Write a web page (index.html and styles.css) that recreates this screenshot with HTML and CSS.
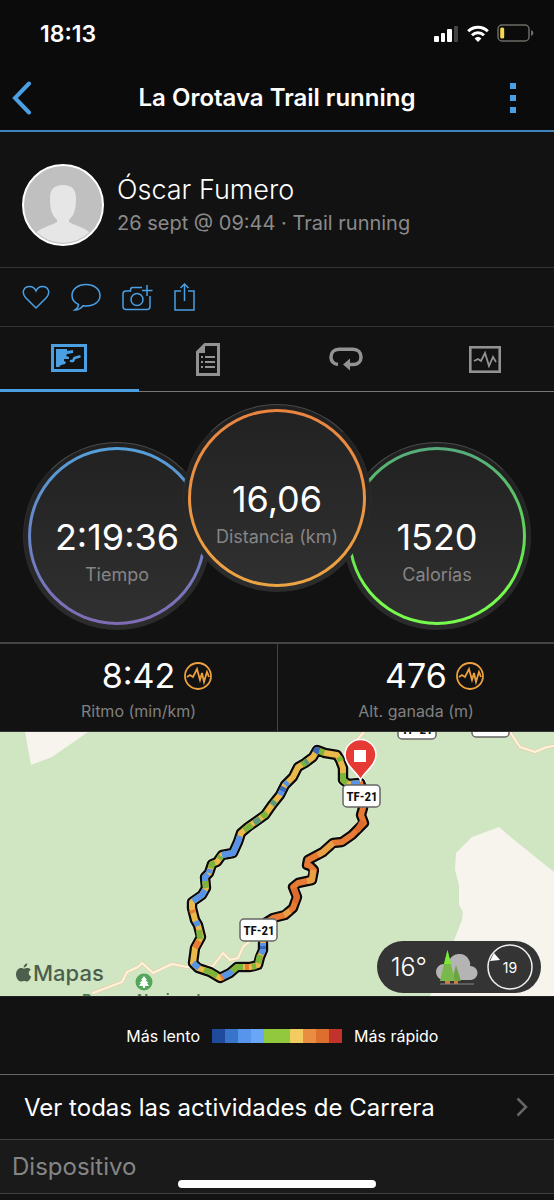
FILE: index.html
```html
<!DOCTYPE html>
<html lang="es">
<head>
<meta charset="utf-8">
<meta name="viewport" content="width=device-width, initial-scale=1">
<title>La Orotava Trail running</title>
<link rel="stylesheet" href="styles.css">
</head>
<body>
<div class="status">
  <time class="clock">18:13</time>
  <div class="status-icons">
    <svg width="25" height="17" viewBox="0 0 25 17" fill="#fff" aria-label="Cobertura"><rect y="11" width="5" height="6" rx="1"/><rect x="7" y="8" width="4" height="9" rx="1"/><rect x="13" y="4" width="5" height="13" rx="1"/><rect x="20" y="1" width="4" height="16" rx="1" fill="#444"/></svg>
    <svg width="22" height="17" viewBox="0 0 22 17" fill="none" stroke="#fff" stroke-width="3" aria-label="Wifi"><path d="M1.2 6.2a14 14 0 0 1 19.6 0M5 10.3a8.6 8.6 0 0 1 12 0"/><path d="M11 17l-3.4-3.6a5 5 0 0 1 6.8 0z" fill="#fff" stroke="none"/></svg>
    <svg width="37" height="19" viewBox="0 0 37 19" aria-label="Batería"><rect x="1" y="1" width="31" height="16" rx="4" fill="none" stroke="#6b6b66" stroke-width="1.5"/><rect x="3.2" y="3.5" width="4" height="11" rx="1.5" fill="#f5d94e"/><path d="M34 6q2.5 1 2.500 3t-2.500 3z" fill="#6b6b66"/></svg>
  </div>
</div>
<header class="header">
  <button class="plain" aria-label="Volver"><svg width="20" height="34" viewBox="0 0 20 34"><path d="M17 2.500L3 17l14 14.500" fill="none" stroke="#4b9fe3" stroke-width="4" stroke-linecap="round" stroke-linejoin="miter"/></svg></button>
  <h1>La Orotava Trail running</h1>
  <button class="plain menu" aria-label="Más opciones"><svg width="6" height="30" viewBox="0 0 6 30" fill="#4b9fe3"><path d="M0 0h6v6H0zM0 12h6v6H0zM0 24h6v6H0z"/></svg></button>
</header>
<main>
<section class="profile">
  <svg class="avatar" viewBox="0 0 82 82" role="img" aria-label="Foto de perfil"><clipPath id="face"><circle cx="41" cy="41" r="38"/></clipPath><circle cx="41" cy="41" r="40" fill="#c0c0c0" stroke="#fff" stroke-width="2"/><g clip-path="url(#face)" fill="#e6e6e6"><path d="M41 21c9 0 13 5 13 13 0 10-1 16-7 22v2c4 3 16 5 22 12v12H13V70c6-7 18-9 22-12v-2c-6-6-7-12-7-22 0-8 4-13 13-13z"/></g></svg>
  <div>
    <h2>Óscar Fumero</h2>
    <p>26 sept @ 09:44 · Trail running</p>
  </div>
</section>
<div class="actions">
  <button class="plain" aria-label="Me gusta"><svg width="28" height="28" viewBox="0 0 28 28"><path d="M14 25L3.500 14.500C-1 9 2 3.500 7.500 3.500c3 0 5.300 1.800 6.500 4.500 1.200-2.700 3.500-4.500 6.500-4.500 5.500 0 8.500 5.500 4 11z"/></svg></button>
  <button class="plain" aria-label="Comentar"><svg width="30" height="28" viewBox="0 0 30 28"><path d="M7.500 21.500C3 19.500 1 16 1 12.500 1 6 7 1.500 15 1.500S29 6 29 12.500 23 23 15 23l-3-.2c-2 2.600-5 4.200-8 4.200 2-1.300 3.500-3.200 3.500-5.500z"/></svg></button>
  <button class="plain" aria-label="Añadir foto"><svg width="31" height="28" viewBox="0 0 31 28"><path d="M20 4.500H10.500q-2 0-2 2.500v1H4q-3 0-3 3v12.500q0 3 3 3h21q3 0 3-3V13M25 2v11M20 7.500h10.500"/><circle cx="15" cy="16.500" r="6"/></svg></button>
  <button class="plain" aria-label="Compartir"><svg width="21" height="28" viewBox="0 0 21 28"><path d="M7 8H1v19h19V8h-6M10.500 18V1M6.500 5l4-4 4 4"/></svg></button>
</div>
<nav class="tabs" aria-label="Vistas de la actividad">
  <button class="tab active" aria-label="Resumen"><svg width="36" height="28" viewBox="0 0 36 28"><rect x="1.500" y="1.500" width="33" height="25" fill="none" stroke="#4b9fe3" stroke-width="3"/><path fill="#4b9fe3" d="M5 5h11v2l6-1v3l-6 1-1 2 3 1v2h-5v2l2 1-1 2-4 1-2 2H5z"/><path d="M20 17h2l1.500-3 5-1.500" fill="none" stroke="#4b9fe3" stroke-width="2.600" stroke-linecap="round" stroke-linejoin="round"/></svg></button>
  <button class="tab" aria-label="Detalles"><svg width="24" height="33" viewBox="0 0 24 33"><path d="M9 1.500h13.500v30h-21V9z" fill="none" stroke="#929292" stroke-width="3"/><path d="M0 9L9 0v10H0zM5 13h2v2H5zm4 0h10v2H9zm-4 5h2v2H5zm4 0h10v2H9zm-4 5h2v2H5zm4 0h10v2H9z" fill="#929292"/></svg></button>
  <button class="tab" aria-label="Vueltas"><svg width="34" height="24" viewBox="0 0 34 24"><path d="M9 17.500C4.500 17 2 14 2 10.200 2 5.500 5 2.200 10 2.200h14c5 0 8 3.300 8 7.800s-3 7.500-8 7.500h-4" fill="none" stroke="#929292" stroke-width="3.500"/><path d="M14 17.500l7-6v12z" fill="#929292"/></svg></button>
  <button class="tab" aria-label="Gráficos"><svg width="32" height="27" viewBox="0 0 32 27"><rect x="1.300" y="1.300" width="29.400" height="24.400" fill="none" stroke="#929292" stroke-width="2.600"/><path d="M5 15l4-2 3 2 4-8 4 13 4-9 3 5" fill="none" stroke="#929292" stroke-width="1.800"/></svg></button>
</nav>
<section class="dials">
  <div class="dial time"><div class="ring"><div class="face"><strong>2:19:36</strong><span>Tiempo</span></div></div></div>
  <div class="dial distance"><div class="ring"><div class="face"><strong>16,06</strong><span>Distancia (km)</span></div></div></div>
  <div class="dial calories"><div class="ring"><div class="face"><strong>1520</strong><span>Calorías</span></div></div></div>
</section>
<section class="stats">
  <div class="stat"><div class="stat-value"><strong>8:42</strong><svg width="28" height="28" viewBox="0 0 28 28"><circle cx="14" cy="14" r="13"/><path d="M3 15l3-2 3 2 4-8 3 11 2-7 2 9 3-10 2 5"/></svg></div><span>Ritmo (min/km)</span></div>
  <div class="stat"><div class="stat-value"><strong>476</strong><svg width="28" height="28" viewBox="0 0 28 28"><circle cx="14" cy="14" r="13"/><path d="M3 15l3-2 3 2 4-8 3 11 2-7 2 9 3-10 2 5"/></svg></div><span>Alt. ganada (m)</span></div>
</section>
<section class="map" aria-label="Mapa del recorrido">
  <svg class="map-canvas" viewBox="0 0 554 264">
    <defs>
      <path id="road" d="M93 261L122 250 127 240 138 235 142 231 153 241 172 232 187 235 213 234 223 221 230 228 238 226 243 215 250 209M510 0L520 15 535 20 547 15 554 14M364 0L356 9"/>
      <path id="climb" d="M263 211V218L260 225 258 233 250 235H237L230 241 220 246 210 240 198 236 193 231 195 216 201 205 198 193 195 188 192 176V170L202 163 206 156 205 145 209 141 212 132 217 130 222 123 233 121 238 110 241 101 248 95 258 88 265 83 272 73 280 63 285 53 293 45 298 35 305 31 313 25 317 18 325 21 337 23 340 28 343 36V48L348 52 360 51"/>
      <path id="descent" d="M360 51L362 56 363 76 361 83 364 91 352 103 342 110 333 111 323 120 308 128 307 133 310 134 314 138 312 148 298 151 293 155 297 165 293 176 285 183 273 186 265 191"/>
    </defs>
    <rect width="554" height="264" fill="#d0e6c3"/>
    <path fill="#f7f4ed" d="M25 0L31 33 52 25 88 0zM499 95L472 105 456 121 455 138 459 153V173L463 180 462 188 453 211 430 264H554V140L513 107z"/>
    <g fill="none" stroke-linecap="round" stroke-linejoin="round">
      <use href="#road" stroke="#efcda9" stroke-width="3.500"/>
      <use href="#road" stroke="#fcf5dc" stroke-width="2"/>
      <g stroke="#fff" stroke-opacity=".35" stroke-width="12"><use href="#climb"/><use href="#descent"/></g>
      <g stroke="#0b0c09" stroke-width="10.500"><use href="#climb"/><use href="#descent"/></g>
      <use href="#climb" stroke="#e9b94b" stroke-width="6"/>
      <use href="#descent" stroke="#e77b35" stroke-width="6"/>
    </g>
    <g fill="none" stroke-width="6" stroke-linejoin="round">
      <path stroke="#7db53c" d="M260 223L258 231M256 234L252 235M243 235H237L230 241M217 244L210 240 204 238M200 207L199 198M206 156L205 149M211 136L212 132 215 131M219 127L221 124M244 98L252 93M262 85L267 81M302 33L308 29M319 19L324 21M339 25L341 29M343 41V48L347 51"/>
      <path stroke="#5f9a78" d="M254 91L260 87M272 73L275 69M305 31L308 29"/>
      <path stroke="#5794e8" d="M263 211V218L261 222M232 239L230 241 222 245M199 236L193 231M198 194L196 189M193 169L202 163 205 158M205 149L205 145 208 142M209 141L210 137M222 123L233 121 238 110 240 104M280 63L283 57M285 53L288 50M351 52L360 51"/>
      <path stroke="#3c66b8" d="M315 21L317 18 319 19M282 59L284 55M263 214V217"/>
      <path stroke="#e77b35" d="M192 178L193 181M195 216L199 209M249 235H245M223 245L221 246"/>
      <path stroke="#e9a044" d="M333 111L323 120 318 123M313 138L312 148 307 149M290 179L284 183"/>
      <path stroke="#dc6b2d" d="M294 156L297 165 295 171M363 89L357 99"/>
    </g>
    <g class="shield">
      <rect x="398" y="-15" width="38" height="22" rx="4"/><text x="417" y="2">TF-21</text>
      <rect x="472" y="-17" width="37" height="22" rx="4"/>
      <rect x="343" y="53" width="37" height="22" rx="4"/><text x="362" y="69">TF-21</text>
      <rect x="240" y="187" width="37" height="22" rx="4"/><text x="259" y="203">TF-21</text>
    </g>
    <path d="M360.500 48c-3-8-15.500-14-15.500-25a15.500 15.500 0 0 1 31 0c0 11-12.500 17-15.500 25z" fill="#e63a35" stroke="#fff" stroke-width="1.500"/>
    <rect x="354" y="18" width="12" height="12" fill="#fff"/>
    <circle cx="144" cy="250" r="8.500" fill="#54a65a"/>
    <path d="M144 244l3 4h-1.500l3 3H147l2 3h-4v2h-2v-2h-4l2-3h-1.500l3-3H141z" fill="#fff"/>
    <text class="place" x="82" y="273">Parque Nacional</text>
    <path fill="#4c5f4c" d="M23.500 235.500c.2-2.300 1.800-3.900 3.800-4.300.1 2.400-1.600 4.200-3.800 4.300zM16 242.500c0-4 2.500-6.500 5-6.500 1.200 0 2 .7 3 .7s2-.7 3.500-.7c1.300 0 2.500.6 3.300 1.700-3 1.800-2.600 5.500.4 6.800-1 2.800-2.500 5-4 5-1.200 0-1.700-.6-3-.6s-2 .6-3.200.6c-2.500 0-5-3.500-5-7z"/>
  </svg>
  <span class="map-brand">Mapas</span>
  <div class="weather">
    <span class="temp">16°</span>
    <svg width="42" height="35" viewBox="0 0 42 35"><path fill="#b4b4b4" d="M8 30a8 8 0 0 1 0-16 8 8 0 0 1 5-3 11 11 0 0 1 20-1q2 3 1 6a7 7 0 0 1 1 14z"/><path fill="#d87839" d="M9 31h5v3H9zM18 31h4v3h-4z"/><path fill="#6da343" d="M20 15l5 16h-9z"/><path fill="#79b84a" d="M11.500 0L19 31H4z"/><path fill="#7bea32" d="M11.500 0l3.500 14H8z"/><path stroke="#858585" d="M4 34h34"/></svg>
    <span class="wind"><svg viewBox="0 0 46 46"><circle cx="23" cy="23" r="22" fill="none" stroke="#f0f0f0" stroke-width="1.500"/><path d="M7 9l-4 8 10-1z" fill="#fff"/></svg><span>19</span></span>
  </div>
</section>
<section class="legend">
  <span>Más lento</span>
  <div class="scale"><i class="c1"></i><i class="c2"></i><i class="c3"></i><i class="c4"></i><i class="c5"></i><i class="c5"></i><i class="c6"></i><i class="c7"></i><i class="c8"></i><i class="c9"></i></div>
  <span>Más rápido</span>
</section>
<a class="more" href="#actividades">Ver todas las actividades de Carrera
  <svg width="12" height="20" viewBox="0 0 12 20"><path d="M1.500 1.500L10 10l-8.500 8.500" fill="none" stroke="#666" stroke-width="2.500"/></svg>
</a>
<h3 class="device">Dispositivo</h3>
</main>
<div class="home"></div>
</body>
</html>
```
FILE: styles.css
```css
* { box-sizing: border-box; }
body {
  margin: 0;
  min-height: 100vh;
  background: #121212;
  color: #fff;
  font-family: Inter, "Liberation Sans", sans-serif;
}
h1, h2, h3, p { margin: 0; }
svg { display: block; flex: none; }
strong { font-weight: 400; }
.plain, .tab {
  display: block;
  padding: 0;
  border: 0;
  background: none;
  color: inherit;
}

.status {
  display: flex;
  align-items: center;
  justify-content: space-between;
  height: 67px;
  padding: 0 20px 0 40px;
  background: #0b0b0b;
}
.clock { font-size: 23px; font-weight: 600; }
.status-icons { display: flex; align-items: center; gap: 8px; }

.header {
  display: grid;
  grid-template-columns: 1fr auto 1fr;
  align-items: center;
  height: 65px;
  padding: 0 12px 2px;
  border-bottom: 2px solid #4183bb;
  background: #0b0b0b;
}
.header .menu { justify-self: end; padding-right: 26px; }
.header h1 { font-size: 24px; font-weight: 600; line-height: 32px; }

.profile {
  display: flex;
  align-items: center;
  gap: 13px;
  height: 136px;
  padding: 18px 22px 8px;
  border-bottom: 1px solid #333;
}
.avatar { width: 82px; height: 82px; }
.profile h2 { font-size: 27px; line-height: 36px; font-weight: 300; }
.profile p { font-size: 20px; line-height: 30px; color: #8a8a8a; }

.actions {
  display: flex;
  align-items: center;
  gap: 21px;
  height: 59px;
  padding: 0 22px;
  border-bottom: 1px solid #333;
}
.actions svg { fill: none; stroke: #4b9fe3; stroke-width: 1.5; }

.tabs {
  display: grid;
  grid-template-columns: repeat(4, 1fr);
  height: 65px;
}
.tab {
  display: flex;
  align-items: center;
  justify-content: center;
  border-bottom: 1px solid #777;
}
.tab.active { border-bottom: 3px solid #4b9fe3; }

.dials {
  display: flex;
  justify-content: center;
  align-items: flex-end;
  height: 250px;
  padding: 12px 0;
}
.dial {
  width: 188px;
  height: 188px;
  padding: 4px;
  border: 1px solid #2c2c2c;
  border-top-color: #4a4a4a;
  border-radius: 50%;
  background: linear-gradient(#202020, #2c2c2c);
}
.ring { height: 100%; padding: 3px; border-radius: 50%; }
.face {
  display: flex;
  flex-direction: column;
  align-items: center;
  height: 100%;
  padding-top: 63px;
  border-radius: 50%;
  background: linear-gradient(#222, #303030);
}
.face strong { font-size: 36px; line-height: 48px; }
.face span { font-size: 18px; line-height: 28px; color: #858585; }
.distance { position: relative; align-self: flex-start; margin: 0 -28px; }
.time .ring { background: linear-gradient(#559fd8, #806bb4); }
.distance .ring { background: linear-gradient(#e98441, #eca443); }
.calories .ring { background: linear-gradient(#57ab7c, #5fd856 50%, #76fa4c 80%); }

.stats {
  display: grid;
  grid-template-columns: 1fr 1fr;
  height: 90px;
  border-top: 2px solid #454545;
  border-bottom: 1px solid #333;
}
.stat { padding-top: 8px; text-align: center; color: #808080; }
.stat + .stat { border-left: 1px solid #444; }
.stat-value {
  display: grid;
  grid-template-columns: 1fr auto 1fr;
  align-items: center;
  gap: 9px;
  color: #fff;
}
.stat-value strong { grid-column: 2; font-size: 34px; line-height: 48px; }
.stat-value svg { fill: none; stroke: #eca03f; stroke-width: 1.8; }
.stat span { font-size: 16px; line-height: 22px; }

.map { position: relative; }
.map-canvas { width: 100%; height: auto; }
.shield rect { fill: #fff; stroke: #666; stroke-width: 1.5; }
.shield text {
  fill: #111;
  font: 700 13px "Liberation Sans Narrow", "Roboto Condensed", Roboto, sans-serif;
  text-anchor: middle;
}
.place {
  fill: #4d7550;
  font-size: 15px;
  font-weight: 600;
}
.map-brand {
  position: absolute;
  left: 33px;
  bottom: 8px;
  font-size: 22px;
  line-height: 30px;
  font-weight: 500;
  color: #4c5f4c;
}
.weather {
  position: absolute;
  right: 13px;
  bottom: 3px;
  display: flex;
  align-items: center;
  gap: 9px;
  height: 52px;
  padding: 0 8px 0 14px;
  border-radius: 26px;
  background: #343434;
}
.temp { font-size: 25px; font-weight: 300; }
.wind { display: grid; place-items: center; width: 46px; height: 46px; font-size: 14px; }
.wind > * { grid-area: 1 / 1; }

.legend {
  display: grid;
  grid-template-columns: 1fr auto 1fr;
  align-items: center;
  gap: 12px;
  height: 79px;
  border-top: 1px solid #222;
  border-bottom: 1px solid #666;
  font-size: 16px;
}
.legend span:first-child { text-align: right; }
.scale { display: flex; height: 14px; }
.scale i { width: 13px; }
.c1 { background: #204b9c; }
.c2 { background: #3974cb; }
.c3 { background: #5795eb; }
.c4 { background: #6aa6f7; }
.c5 { background: #91c83e; }
.c6 { background: #f2cb61; }
.c7 { background: #e98e40; }
.c8 { background: #dc6f2d; }
.c9 { background: #c2342b; }

.more {
  display: flex;
  align-items: center;
  justify-content: space-between;
  height: 64px;
  padding: 0 26px 0 24px;
  color: #fff;
  font-size: 24px;
  text-decoration: none;
}
.device {
  height: 55px;
  padding-left: 12px;
  border: solid #404040;
  border-width: 1px 0;
  background: #1a1a1a;
  color: #858585;
  font-size: 24px;
  line-height: 53px;
  font-weight: 400;
}
.home {
  position: fixed;
  bottom: 12px;
  left: 50%;
  width: 198px;
  height: 8px;
  margin-left: -99px;
  border-radius: 4px;
  background: #fff;
}
```
